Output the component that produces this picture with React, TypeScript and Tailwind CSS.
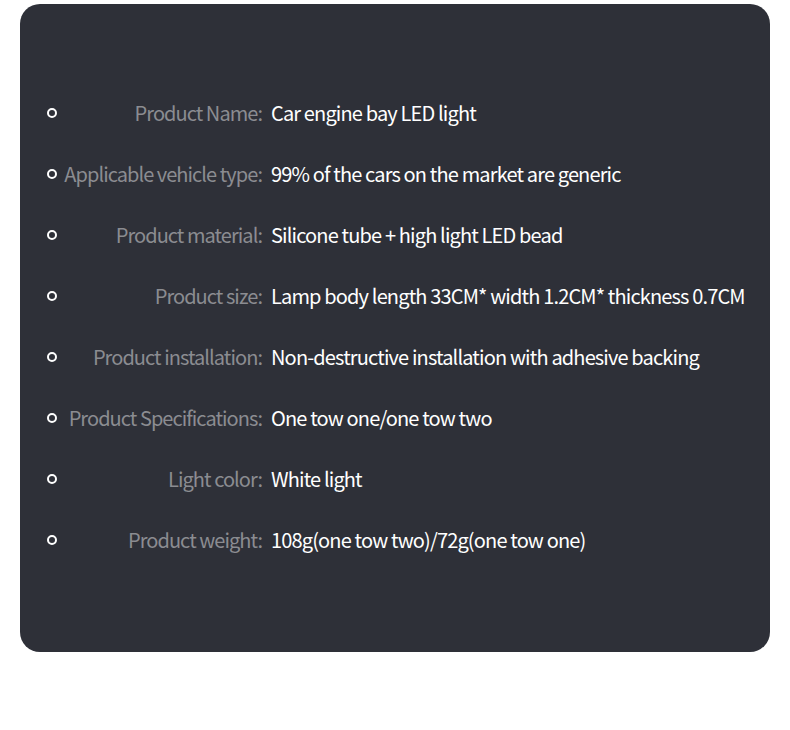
import React from 'react'

const specs = [
  { label: 'Product Name:', value: 'Car engine bay LED light' },
  { label: 'Applicable vehicle type:', value: '99% of the cars on the market are generic' },
  { label: 'Product material:', value: 'Silicone tube + high light LED bead' },
  { label: 'Product size:', value: 'Lamp body length 33CM* width 1.2CM* thickness 0.7CM' },
  { label: 'Product installation:', value: 'Non-destructive installation with adhesive backing' },
  { label: 'Product Specifications:', value: 'One tow one/one tow two' },
  { label: 'Light color:', value: 'White light' },
  { label: 'Product weight:', value: '108g(one tow two)/72g(one tow one)' },
]

function App() {
  return (
    <div className="w-[790px] h-[730px] bg-white pt-1 pl-5" style={{ fontFamily: '"Noto Sans CJK SC", "Noto Sans", sans-serif' }}>
      <div className="w-[750px] h-[648px] rounded-[20px] bg-[#2e3038] pt-[78px]">
        {specs.map((item) => (
          <div key={item.label} className="h-[61px] flex items-center text-[20px]">
            <span className="ml-[27px] w-[10px] h-[10px] rounded-full border-2 border-white shrink-0"></span>
            <span className="w-[205px] text-right text-[#8b8c91] shrink-0 tracking-[-0.95px]">{item.label}</span>
            <span className="ml-[9px] text-white whitespace-nowrap tracking-[-0.85px]">{item.value}</span>
          </div>
        ))}
      </div>
    </div>
  )
}

export default App
